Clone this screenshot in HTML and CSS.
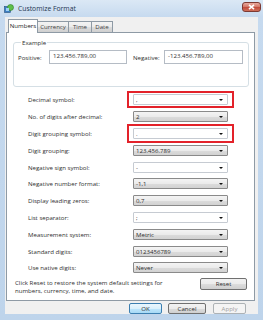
FILE: index.html
```html
<!DOCTYPE html>
<html lang="en">
<head>
    <meta charset="UTF-8">
    <title>Customize Format</title>
    <link rel="stylesheet" href="styles.css">
</head>
<body>
<div class="window">
    <div class="titlebar">
        <svg class="appIcon" width="10" height="10" viewBox="0 0 10 10">
            <rect x="0.5" y="2.5" width="6" height="6" fill="#3c7fc4" stroke="#25507e" stroke-width="0.6"/>
            <circle cx="6.5" cy="3.5" r="3" fill="#5fc04a" stroke="#2f7d2a" stroke-width="0.6"/>
            <rect x="2" y="4" width="3" height="3" fill="#9fd0f5"/>
        </svg>
        <span class="title">Customize Format</span>
        <span class="closeBtn">
            <svg width="7" height="6" viewBox="0 0 7 6">
                <path d="M1 0.8 L6 5.2 M6 0.8 L1 5.2" stroke="#ffffff" stroke-width="1.6"/>
            </svg>
        </span>
    </div>

    <div class="client">
        <div class="tabs">
            <span class="tab active">Numbers</span>
            <span class="tab">Currency</span>
            <span class="tab">Time</span>
            <span class="tab">Date</span>
        </div>

        <div class="panel">
            <fieldset class="example">
                <legend>Example</legend>
                <div class="exampleGrid">
                    <span>Positive:</span>
                    <span class="textBox">123.456.789,00</span>
                    <span class="negLabel">Negative:</span>
                    <span class="textBox">-123.456.789,00</span>
                </div>
            </fieldset>

            <div class="fields">
                <span class="label">Decimal symbol:</span>
                <span class="combo edit marked">,<i class="arrow"></i></span>

                <span class="label">No. of digits after decimal:</span>
                <span class="combo">2<i class="arrow"></i></span>

                <span class="label">Digit grouping symbol:</span>
                <span class="combo edit marked">.<i class="arrow"></i></span>

                <span class="label">Digit grouping:</span>
                <span class="combo">123.456.789<i class="arrow"></i></span>

                <span class="label">Negative sign symbol:</span>
                <span class="combo edit">-<i class="arrow"></i></span>

                <span class="label">Negative number format:</span>
                <span class="combo">-1,1<i class="arrow"></i></span>

                <span class="label">Display leading zeros:</span>
                <span class="combo">0,7<i class="arrow"></i></span>

                <span class="label">List separator:</span>
                <span class="combo edit">;<i class="arrow"></i></span>

                <span class="label">Measurement system:</span>
                <span class="combo">Metric<i class="arrow"></i></span>

                <span class="label">Standard digits:</span>
                <span class="combo">0123456789<i class="arrow"></i></span>

                <span class="label">Use native digits:</span>
                <span class="combo">Never<i class="arrow"></i></span>
            </div>

            <div class="resetRow">
                <p>Click Reset to restore the system default settings for<br>numbers, currency, time, and date.</p>
                <button class="btn resetBtn">Reset</button>
            </div>
        </div>

        <div class="actions">
            <button class="btn okBtn">OK</button>
            <button class="btn cancelBtn">Cancel</button>
            <button class="btn applyBtn" disabled>Apply</button>
        </div>
    </div>
</div>
</body>
</html>
```

FILE: styles.css
```css
* {
    box-sizing: border-box;
}

body {
    margin: 0;
    font-family: "Open Sans", "Noto Sans", sans-serif;
    font-size: 6.1px;
    color: #2f2f2f;
}

.window {
    width: 263px;
    height: 320px;
    background: linear-gradient(to bottom, #dbe8f5 0px, #c6daef 17px, #bed4eb 100%);
    padding: 0 5px 6px 5px;
    display: flex;
    flex-direction: column;
}

.titlebar {
    height: 17px;
    display: flex;
    align-items: center;
}

.appIcon {
    margin-left: -1px;
    margin-right: 4px;
}

.title {
    font-size: 6.8px;
    color: #1e3550;
}

.closeBtn {
    margin-left: auto;
    margin-right: -3px;
    margin-top: -4px;
    width: 19px;
    height: 10px;
    border: 1px solid #7d3a33;
    border-radius: 3px;
    background: linear-gradient(to bottom, #e9a99d 0%, #d47a6b 45%, #c24c3c 55%, #cf6f5a 100%);
    display: flex;
    align-items: center;
    justify-content: center;
}

.client {
    flex: 1;
    background: #f0f0f0;
    padding: 2px 3px 0 1px;
    overflow: hidden;
}

.tabs {
    display: flex;
    align-items: flex-end;
    height: 13px;
    padding-left: 2px;
    position: relative;
    z-index: 1;
}

.tab {
    height: 11px;
    line-height: 10px;
    padding: 0;
    text-align: center;
    border: 1px solid #8e9aa5;
    border-bottom: none;
    border-left: none;
    background: linear-gradient(to bottom, #f3f3f3 0%, #ebebeb 50%, #dddddd 51%, #cfcfcf 100%);
    color: #444444;
}

.tab.active {
    width: 30px;
    height: 14px;
    line-height: 12px;
    background: #ffffff;
    border-left: 1px solid #8e9aa5;
    margin-bottom: -1px;
    color: #222222;
}

.tab:nth-child(2) { width: 31px; }
.tab:nth-child(3) { width: 23px; }
.tab:nth-child(4) { width: 21px; }

.panel {
    height: 269px;
    background: #ffffff;
    border: 1px solid #8e9aa5;
    padding: 5px 5px 0 6px;
}

.example {
    margin: 0;
    padding: 3px 5px 0 4px;
    height: 49px;
    border: 1px solid #d5dfe5;
    border-radius: 3px;
}

.example legend {
    padding: 0 1px;
    margin-left: 3px;
    line-height: 9px;
}

.exampleGrid {
    display: grid;
    grid-template-columns: 31px 78px 37px 79px;
    align-items: center;
}

.negLabel {
    padding-left: 6px;
}

.textBox {
    height: 14px;
    line-height: 10px;
    padding: 0 3px;
    border: 1px solid #b5bcc5;
}

.fields {
    margin-top: 4.5px;
    padding-left: 15px;
    display: grid;
    grid-template-columns: 105px 95px;
    grid-auto-rows: 16.8px;
    align-items: center;
}

.combo {
    position: relative;
    height: 11px;
    line-height: 9px;
    padding-left: 2px;
    border: 1px solid #8a8a8a;
    border-radius: 1px;
    background: linear-gradient(to bottom, #f4f4f4 0%, #ebebeb 50%, #dcdcdc 51%, #d2d2d2 100%);
}

.combo.edit {
    background: #ffffff;
    border-color: #c6cbd2;
}

.arrow {
    position: absolute;
    right: 4px;
    top: 4px;
    border-left: 2px solid transparent;
    border-right: 2px solid transparent;
    border-top: 2px solid #111111;
}

.combo.marked::after {
    content: "";
    position: absolute;
    left: -7px;
    right: -7px;
    top: -4px;
    bottom: -4px;
    border: 2px solid #e3222a;
}

.fields .combo:nth-child(6)::after {
    top: -5px;
    bottom: -5px;
}

.resetRow {
    margin-top: 1.5px;
    display: flex;
    align-items: flex-start;
    justify-content: space-between;
    padding-left: 2px;
    padding-right: 2px;
}

.resetRow p {
    margin: 1px 0 0 0;
    line-height: 8px;
}

.btn {
    font-family: "Open Sans", "Noto Sans", sans-serif;
    font-size: 6.1px;
    color: #2f2f2f;
    height: 11px;
    padding: 0;
    line-height: 9px;
    border: 1px solid #707070;
    border-radius: 2px;
    background: linear-gradient(to bottom, #f2f2f2 0%, #ebebeb 50%, #dddddd 51%, #cfcfcf 100%);
}

.resetBtn {
    width: 47px;
    height: 12px;
}

.actions {
    display: flex;
    justify-content: flex-end;
    gap: 6px;
    padding-right: 9px;
    margin-top: 2px;
}

.okBtn {
    width: 33px;
    border-color: #3c7fb1;
    background: linear-gradient(to bottom, #eaf6fd 0%, #d9f0fc 50%, #bee6fd 51%, #a7d9f5 100%);
}

.cancelBtn {
    width: 38px;
}

.applyBtn {
    width: 33px;
    margin-left: 1px;
    border-color: #adb2b5;
    background: #f4f4f4;
    color: #a0a0a0;
}
```
